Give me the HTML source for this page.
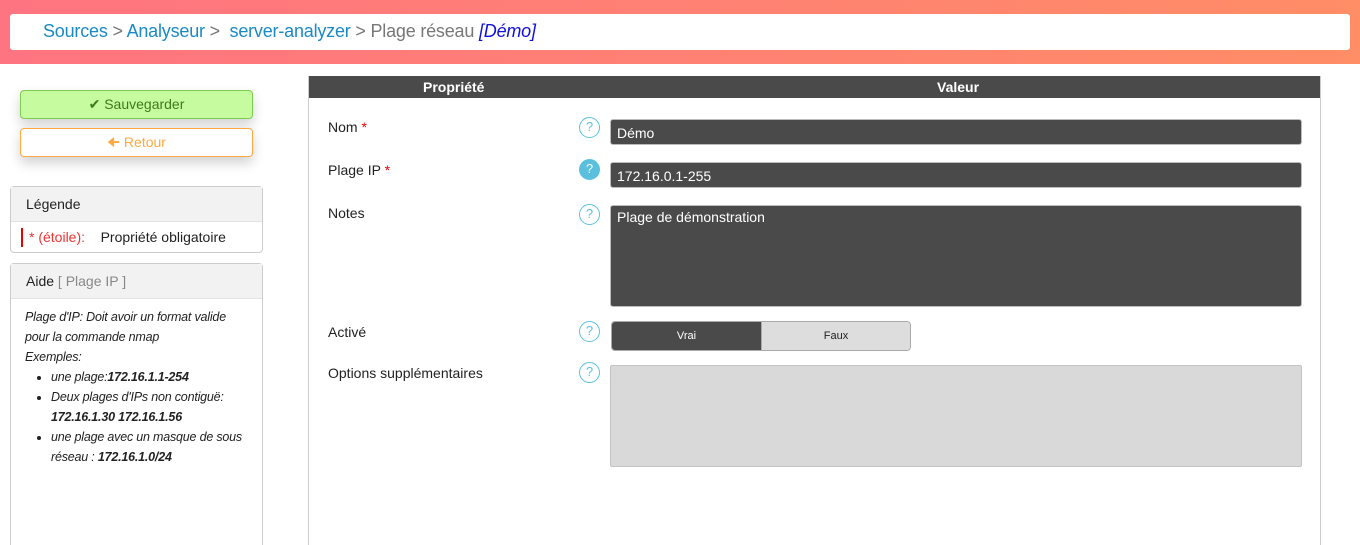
<!DOCTYPE html>
<html><head><meta charset="utf-8"><style>
*{box-sizing:border-box;margin:0;padding:0}
html,body{width:1360px;height:545px;overflow:hidden}
body{background:#fff;font-family:"Liberation Sans",sans-serif;position:relative}
.hdr{position:absolute;left:0;top:0;width:1360px;height:64px;background:linear-gradient(90deg,#ff7481,#ff8d66)}
.bc{position:absolute;left:10px;top:14px;width:1340px;height:36px;background:#fff;border-radius:3px;font-size:18px;line-height:34px;padding-left:33px;color:#777;letter-spacing:-0.2px}
.bc a{color:#1a8ac6;text-decoration:none}
.bc i{color:#1010e0}
.btn{position:absolute;left:20px;width:233px;height:29px;border-radius:4px;font-size:14px;text-align:center;line-height:27px;box-shadow:0 6px 12px rgba(0,0,0,.18)}
.save{top:90px;background:#c6fba0;border:1px solid #7ccd4e;color:#3d7a1e}
.ret{top:128px;background:#fff;border:1px solid #ffa940;color:#ffa940}
.panel{position:absolute;left:10px;width:253px;border:1px solid #ccc;border-radius:4px;font-size:14px;color:#222}
.ph{background:#f2f2f2;height:35px;line-height:35px;padding-left:15px;border-bottom:1px solid #e3e3e3}
.help{font-style:italic;font-size:12.5px;line-height:20px;padding:8px 14px;color:#222;letter-spacing:-0.2px}
.help ul{padding-left:26px}
.tbl{position:absolute;left:308px;top:76px;width:1013px;height:480px;border:1px solid #ccc;border-top:none}
.th{height:22px;background:#4a4a4a;color:#fff;font-weight:bold;font-size:14px;line-height:22px;position:relative}
.lbl{position:absolute;left:328px;font-size:14px;color:#222}
.lbl b{color:#e00;font-weight:normal}
.q{position:absolute;left:579px;width:21px;height:21px;border:1.5px solid #5bc0de;border-radius:50%;color:#5bc0de;font-size:13px;text-align:center;line-height:18px}
.q.f{background:#5bc0de;color:#fff}
.inp{position:absolute;left:610px;width:692px;background:#4a4a4a;border:1px solid #bbb;border-radius:3px;color:#fff;font-size:14px;padding:5px 6px}
</style></head><body>
<div class="hdr"></div>
<div class="bc"><a>Sources</a> &gt; <a>Analyseur</a> &gt;&nbsp; <a>server-analyzer</a> &gt; Plage réseau <i>[Démo]</i></div>
<div class="btn save">&#10004; Sauvegarder</div>
<div class="btn ret">&#129032; Retour</div>
<div class="panel" style="top:186px;height:67px"><div class="ph">Légende</div>
<div style="margin:6px 0 0 10px;border-left:2px solid #e00;padding-left:6px;line-height:19px"><span style="color:#e33">* (étoile):</span>&nbsp;&nbsp;&nbsp; Propriété obligatoire</div></div>
<div class="panel" style="top:263px;height:300px"><div class="ph">Aide <span style="color:#888">[ Plage IP ]</span></div>
<div class="help">Plage d'IP: Doit avoir un format valide pour la commande nmap<br>Exemples:
<ul><li>une plage:<b>172.16.1.1-254</b></li><li>Deux plages d'IPs non contiguë: <b>172.16.1.30 172.16.1.56</b></li><li>une plage avec un masque de sous réseau : <b>172.16.1.0/24</b></li></ul></div></div>
<div class="tbl"><div class="th"><span style="position:absolute;left:114px">Propriété</span><span style="position:absolute;left:628px">Valeur</span></div></div>
<div class="lbl" style="top:119px">Nom <b>*</b></div>
<div class="lbl" style="top:162px">Plage IP <b>*</b></div>
<div class="lbl" style="top:205px">Notes</div>
<div class="lbl" style="top:324px">Activé</div>
<div class="lbl" style="top:365px">Options supplémentaires</div>
<div class="q" style="top:117px">?</div>
<div class="q f" style="top:159px">?</div>
<div class="q" style="top:204px">?</div>
<div class="q" style="top:321px">?</div>
<div class="q" style="top:362px">?</div>
<div class="inp" style="top:119px;height:26px">Démo</div>
<div class="inp" style="top:162px;height:26px">172.16.0.1-255</div>
<div class="inp" style="top:205px;height:102px;padding-top:3px">Plage de démonstration</div>
<div style="position:absolute;left:611px;top:321px;width:300px;height:30px;border:1px solid #aaa;border-radius:4px;overflow:hidden;font-size:11px;display:flex">
<div style="width:150px;background:#4a4a4a;color:#fff;text-align:center;line-height:28px">Vrai</div>
<div style="width:150px;background:#ddd;color:#222;text-align:center;line-height:28px;border-left:1px solid #aaa">Faux</div></div>
<div style="position:absolute;left:610px;top:365px;width:692px;height:102px;background:#d9d9d9;border:1px solid #c4c4c4;border-radius:2px"></div>
</body></html>
